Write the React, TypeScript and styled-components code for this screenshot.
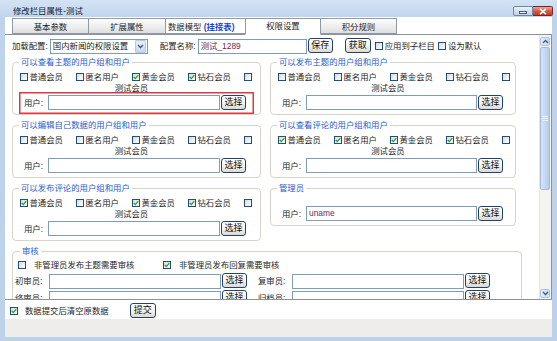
import React from 'react';
import styled, {createGlobalStyle} from 'styled-components';

const GlobalStyle = createGlobalStyle`
  html, body {
    margin: 0;
    padding: 0;
    background: #fff;
  }
  body {
    font-family: "Liberation Sans", "Noto Sans CJK SC", sans-serif;
    font-size: 8.4px;
    line-height: 10px;
    color: #1e1e1e;
  }
  * { box-sizing: border-box; }
`

const members = ['普通会员', '匿名用户', '黄金会员', '钻石会员']

const Check = ({checked}: {checked?: boolean}) => (
    <Box>
        {checked && (
            <svg width="6" height="6" viewBox="0 0 6 6">
                <path d="M0.7 2.9 L2.3 4.6 L5.3 1.1" fill="none" stroke="#22a022" strokeWidth="1.3"/>
            </svg>
        )}
    </Box>
)

const Chevron = ({up}: {up?: boolean}) => (
    <svg width="7" height="5" viewBox="0 0 7 5">
        <path d={up ? 'M1 4 L3.5 1.5 L6 4' : 'M1 1 L3.5 3.5 L6 1'} fill="none" stroke="#3d5a86" strokeWidth="1.3"/>
    </svg>
)

type UserFieldProps = { highlight?: boolean, inputW?: number, value?: string, gap?: number }
const UserField = ({highlight, inputW = 172, value, gap = -1}: UserFieldProps) => (
    <UserRow $highlight={highlight} $gap={gap}>
        <RowLabel $w={24}>用户:</RowLabel>
        <TextInput $w={inputW}>{value}</TextInput>
        <SmallButton $w={25}>选择</SmallButton>
    </UserRow>
)

type MemberGroupProps = { title: string, checks: boolean[], highlight?: boolean, inputW?: number }
const MemberGroup = ({title, checks, highlight, inputW}: MemberGroupProps) => (
    <Group>
        <Legend>{title}</Legend>
        <CheckRow>
            {members.map((m, i) => (
                <CheckItem key={m}><Check checked={checks[i]}/><span>{m}</span></CheckItem>
            ))}
            <Check checked={checks[4]}/>
        </CheckRow>
        <TestLine>测试会员</TestLine>
        <UserField highlight={highlight} inputW={inputW}/>
    </Group>
)

export default function App() {
    return (
        <>
            <GlobalStyle/>
            <Window>
                <TitleBar>
                    <Title>修改栏目属性-测试</Title>
                    <WinButtons>
                        <MinButton><MinDash/></MinButton>
                        <CloseButton>
                            <svg width="8" height="7" viewBox="0 0 8 7">
                                <path d="M1 0.8 L7 6.2 M7 0.8 L1 6.2" stroke="#fff" strokeWidth="1.6"/>
                            </svg>
                        </CloseButton>
                    </WinButtons>
                </TitleBar>

                <Client>
                    <TabStrip>
                        <Tab $w={77}>基本参数</Tab>
                        <Tab $w={78}>扩展属性</Tab>
                        <Tab $w={81} $plain>数据模型 <TabNote>(挂接表)</TabNote></Tab>
                        <Tab $w={76} $active>权限设置</Tab>
                        <Tab $w={77}>积分规则</Tab>
                    </TabStrip>

                    <Pane>
                        <Content>
                            <ConfigRow>
                                <span>加载配置:</span>
                                <Select>
                                    <SelectText>国内新闻的权限设置</SelectText>
                                    <SelectArrow><Chevron/></SelectArrow>
                                </Select>
                                <ConfigName>配置名称:</ConfigName>
                                <TextInput $w={109} $ml={2}>测试<Latin>_1289</Latin></TextInput>
                                <SmallButton $w={25}>保存</SmallButton>
                                <SmallButton $w={26} $ml={12}>获取</SmallButton>
                                <InlineCheck $ml={4}><Check/><span>应用到子栏目</span></InlineCheck>
                                <InlineCheck $ml={3}><Check/><span>设为默认</span></InlineCheck>
                            </ConfigRow>

                            <Columns>
                                <Column>
                                    <MemberGroup title="可以查看主题的用户组和用户" checks={[false, false, true, true, false]} highlight/>
                                    <MemberGroup title="可以编辑自己数据的用户组和用户" checks={[false, false, false, false, false]}/>
                                    <MemberGroup title="可以发布评论的用户组和用户" checks={[true, false, true, true, false]}/>
                                </Column>
                                <Column>
                                    <MemberGroup title="可以发布主题的用户组和用户" checks={[false, false, false, false, false]} inputW={171}/>
                                    <MemberGroup title="可以查看评论的用户组和用户" checks={[true, true, true, true, false]} inputW={171}/>
                                    <Group>
                                        <Legend>管理员</Legend>
                                        <UserField inputW={171} value="uname" gap={10}/>
                                    </Group>
                                </Column>
                            </Columns>

                            <AuditGroup>
                                <AuditLegend>审核</AuditLegend>
                                <AuditChecks>
                                    <AuditItem $w={145}><Check/><span>非管理员发布主题需要审核</span></AuditItem>
                                    <AuditItem><Check checked/><span>非管理员发布回复需要审核</span></AuditItem>
                                </AuditChecks>
                                <AuditRow>
                                    <RowLabel $w={34}>初审员:</RowLabel>
                                    <TextInput $w={172}/>
                                    <SmallButton $w={25}>选择</SmallButton>
                                    <RowLabel $w={34} $ml={11}>复审员:</RowLabel>
                                    <TextInput $w={172}/>
                                    <SmallButton $w={25}>选择</SmallButton>
                                </AuditRow>
                                <AuditRow $mt={1}>
                                    <RowLabel $w={34}>终审员:</RowLabel>
                                    <TextInput $w={172}/>
                                    <SmallButton $w={25}>选择</SmallButton>
                                    <RowLabel $w={34} $ml={11}>归档员:</RowLabel>
                                    <TextInput $w={172}/>
                                    <SmallButton $w={25}>选择</SmallButton>
                                </AuditRow>
                            </AuditGroup>
                        </Content>

                        <ScrollBar>
                            <ScrollArrow><Chevron up/></ScrollArrow>
                            <Thumb><Grip/></Thumb>
                            <Track/>
                            <ScrollArrow><Chevron/></ScrollArrow>
                        </ScrollBar>
                    </Pane>

                    <Footer>
                        <InlineCheck $gap={7}><Check checked/><span>数据提交后清空原数据</span></InlineCheck>
                        <SubmitButton>提交</SubmitButton>
                    </Footer>
                    <StatusBar/>
                </Client>
            </Window>
        </>
    )
}

const Window = styled.div`
  width: 557px;
  height: 341px;
  padding: 0 5px 4px 5px;
  display: flex;
  flex-direction: column;
  background: linear-gradient(#d3e3f4, #bfd4ec 18px, #bcd1ea);
`

const TitleBar = styled.div`
  height: 17px;
  flex: none;
  display: flex;
  justify-content: space-between;
  padding-left: 8px;
`

const Title = styled.div`
  margin-top: 6px;
  color: #16202c;
`

const WinButtons = styled.div`
  display: flex;
  margin: 6px -1px 0 0;
  height: 10px;
`

const MinButton = styled.div`
  width: 20px;
  height: 10px;
  border: 1px solid #75859c;
  border-radius: 2px 0 0 2px;
  background: linear-gradient(#eef3f9, #d3dfee 50%, #c3d3e8);
  display: flex;
  justify-content: center;
  align-items: flex-end;
  padding-bottom: 1px;
`

const MinDash = styled.div`
  width: 8px;
  height: 3px;
  background: #fff;
  border: 1px solid #4a5a72;
`

const CloseButton = styled.div`
  width: 20px;
  height: 10px;
  border: 1px solid #6e2a24;
  border-left: none;
  border-radius: 0 2px 2px 0;
  background: linear-gradient(#eaa596, #d35b48 50%, #c13a2a);
  display: flex;
  align-items: center;
  justify-content: center;
`

const Client = styled.div`
  flex: 1;
  background: #fff;
  display: flex;
  flex-direction: column;
  min-height: 0;
`

const TabStrip = styled.div`
  height: 17px;
  flex: none;
  display: flex;
  padding: 1px 0 0 7px;
`

const Tab = styled.div<{ $w: number, $active?: boolean, $plain?: boolean }>`
  width: ${p => p.$w}px;
  height: ${p => p.$active ? 17 : 16}px;
  margin-left: -1px;
  border: 1px solid #8e9aa7;
  border-bottom-color: ${p => p.$active ? '#fff' : '#8e9aa7'};
  background: ${p => p.$active || p.$plain ? '#fff' : 'linear-gradient(#fdfdfd, #ececec 60%, #dedede)'};
  text-align: ${p => p.$plain ? 'left' : 'center'};
  padding: ${p => p.$active ? '2px 0 0' : p.$plain ? '3px 0 0 2px' : '3px 0 0'};
  white-space: nowrap;
  position: relative;
  z-index: ${p => p.$active ? 2 : 1};
  &:first-child { margin-left: 0; }
`

const TabNote = styled.span`
  color: #1c3ed6;
  font-weight: bold;
`

const Pane = styled.div`
  height: 266px;
  flex: none;
  display: flex;
  border-top: 1px solid #8d9299;
  border-bottom: 1px solid #8d9299;
  border-right: 1px solid #8d9299;
  overflow: hidden;
`

const Content = styled.div`
  flex: 1;
  min-width: 0;
  overflow: hidden;
  padding: 3px 0 0 7px;
`

const ConfigRow = styled.div`
  height: 16px;
  display: flex;
  align-items: center;
  white-space: nowrap;
`

const Select = styled.div`
  width: 98px;
  height: 15px;
  margin-left: 2px;
  border: 1px solid #7f9db9;
  display: flex;
  align-items: center;
  padding: 0 1px 0 2px;
`

const SelectText = styled.span`
  flex: 1;
`

const SelectArrow = styled.span`
  width: 11px;
  height: 13px;
  border: 1px solid #b7c9e4;
  border-radius: 1px;
  background: linear-gradient(#e8effa, #c6d7f0);
  display: flex;
  align-items: center;
  justify-content: center;
`

const ConfigName = styled.span`
  margin-left: 12px;
`

const Latin = styled.span`
  color: #7a2648;
`

const TextInput = styled.div<{ $w: number, $ml?: number }>`
  width: ${p => p.$w}px;
  height: 15px;
  flex: none;
  margin-left: ${p => p.$ml ?? 0}px;
  border: 1px solid #7f9db9;
  background: #fff;
  padding: 1px 2px 0;
  color: #6a2a68;
  white-space: nowrap;
  overflow: hidden;
`

const SmallButton = styled.div<{ $w: number, $ml?: number }>`
  width: ${p => p.$w}px;
  height: 15px;
  flex: none;
  margin-left: ${p => p.$ml ?? 1}px;
  margin-top: -1px;
  border: 1px solid #22426e;
  border-radius: 3px;
  background: linear-gradient(#ffffff, #f3f2ee 55%, #dcd9cf);
  text-align: center;
  font-size: 9px;
  line-height: 13px;
  color: #111;
`

const SubmitButton = styled(SmallButton).attrs({$w: 26, $ml: 21})`
  height: 15px;
  margin-top: -1px;
`

const Box = styled.span`
  width: 8px;
  height: 8px;
  flex: none;
  border: 1px solid #1f4f7e;
  background: linear-gradient(135deg, #dcdad2, #ffffff);
  display: inline-flex;
  align-items: center;
  justify-content: center;
`

const InlineCheck = styled.span<{ $ml?: number, $gap?: number }>`
  display: inline-flex;
  align-items: center;
  gap: ${p => p.$gap ?? 2}px;
  margin-left: ${p => p.$ml ?? 0}px;
`

const Columns = styled.div`
  display: grid;
  grid-template-columns: 249px 246px;
  column-gap: 9px;
  margin-top: 3px;
`

const Column = styled.div`
  display: flex;
  flex-direction: column;
  gap: 5px;
`

const Group = styled.fieldset`
  margin: 0;
  padding: 0 6px;
  min-width: 0;
  border: 1px solid #d8d5c8;
  border-radius: 4px;
`

const Legend = styled.legend`
  padding: 0 2px;
  color: #1f5dd0;
  line-height: 10px;
`

const CheckRow = styled.div`
  margin-top: 4px;
  height: 12px;
  display: flex;
  align-items: center;
  padding-left: 1px;
`

const CheckItem = styled.span`
  width: 56px;
  flex: none;
  display: flex;
  align-items: center;
  gap: 1.5px;
  white-space: nowrap;
`

const TestLine = styled.div`
  height: 10px;
  text-align: center;
  padding-right: 10px;
`

const UserRow = styled.div<{ $highlight?: boolean, $gap: number }>`
  margin-top: ${p => p.$gap}px;
  padding: 3px 0 4px 5px;
  display: flex;
  align-items: center;
  box-shadow: ${p => p.$highlight ? 'inset 0 0 0 1.5px #e0393c' : 'none'};
`

const RowLabel = styled.span<{ $w: number, $ml?: number }>`
  width: ${p => p.$w}px;
  flex: none;
  margin-left: ${p => p.$ml ?? 0}px;
  white-space: nowrap;
`

const AuditGroup = styled(Group)`
  width: 510px;
  margin-top: 5px;
  padding: 0 2px 6px;
`

const AuditLegend = styled(Legend)`
  margin-left: 5px;
`

const AuditChecks = styled.div`
  margin-top: 4px;
  height: 10px;
  display: flex;
  align-items: center;
  padding-left: 3px;
`

const AuditItem = styled.span<{ $w?: number }>`
  width: ${p => p.$w ? `${p.$w}px` : 'auto'};
  flex: none;
  display: flex;
  align-items: center;
  gap: 8px;
  white-space: nowrap;
`

const AuditRow = styled.div<{ $mt?: number }>`
  margin-top: ${p => p.$mt ?? 3}px;
  height: 16px;
  display: flex;
  align-items: center;
`

const ScrollBar = styled.div`
  width: 12px;
  flex: none;
  display: flex;
  flex-direction: column;
  padding: 2px 1px 1px 0;
  background: #f4f4f2;
  border-left: 1px solid #e6e6e2;
`

const ScrollArrow = styled.div`
  height: 9px;
  flex: none;
  border: 1px solid #afc4e2;
  border-radius: 2px;
  background: linear-gradient(90deg, #e4edf9, #c9daf1);
  display: flex;
  align-items: center;
  justify-content: center;
`

const Thumb = styled.div`
  height: 143px;
  flex: none;
  margin-top: 1px;
  border: 1px solid #a3bbdd;
  border-radius: 2px;
  background: linear-gradient(90deg, #d6e4f6, #c2d5f0 60%, #b6cbeb);
  display: flex;
  align-items: center;
  justify-content: center;
`

const Grip = styled.div`
  width: 5px;
  height: 5px;
  border-top: 1px solid #eef4fc;
  border-bottom: 1px solid #eef4fc;
  background: linear-gradient(#eef4fc, #eef4fc) center / 100% 1px no-repeat;
`

const Track = styled.div`
  flex: 1;
`

const Footer = styled.div`
  height: 19px;
  flex: none;
  display: flex;
  align-items: center;
  padding: 2px 0 0 5px;
  white-space: nowrap;
`

const StatusBar = styled.div`
  flex: 1;
  background: #efecec;
`
